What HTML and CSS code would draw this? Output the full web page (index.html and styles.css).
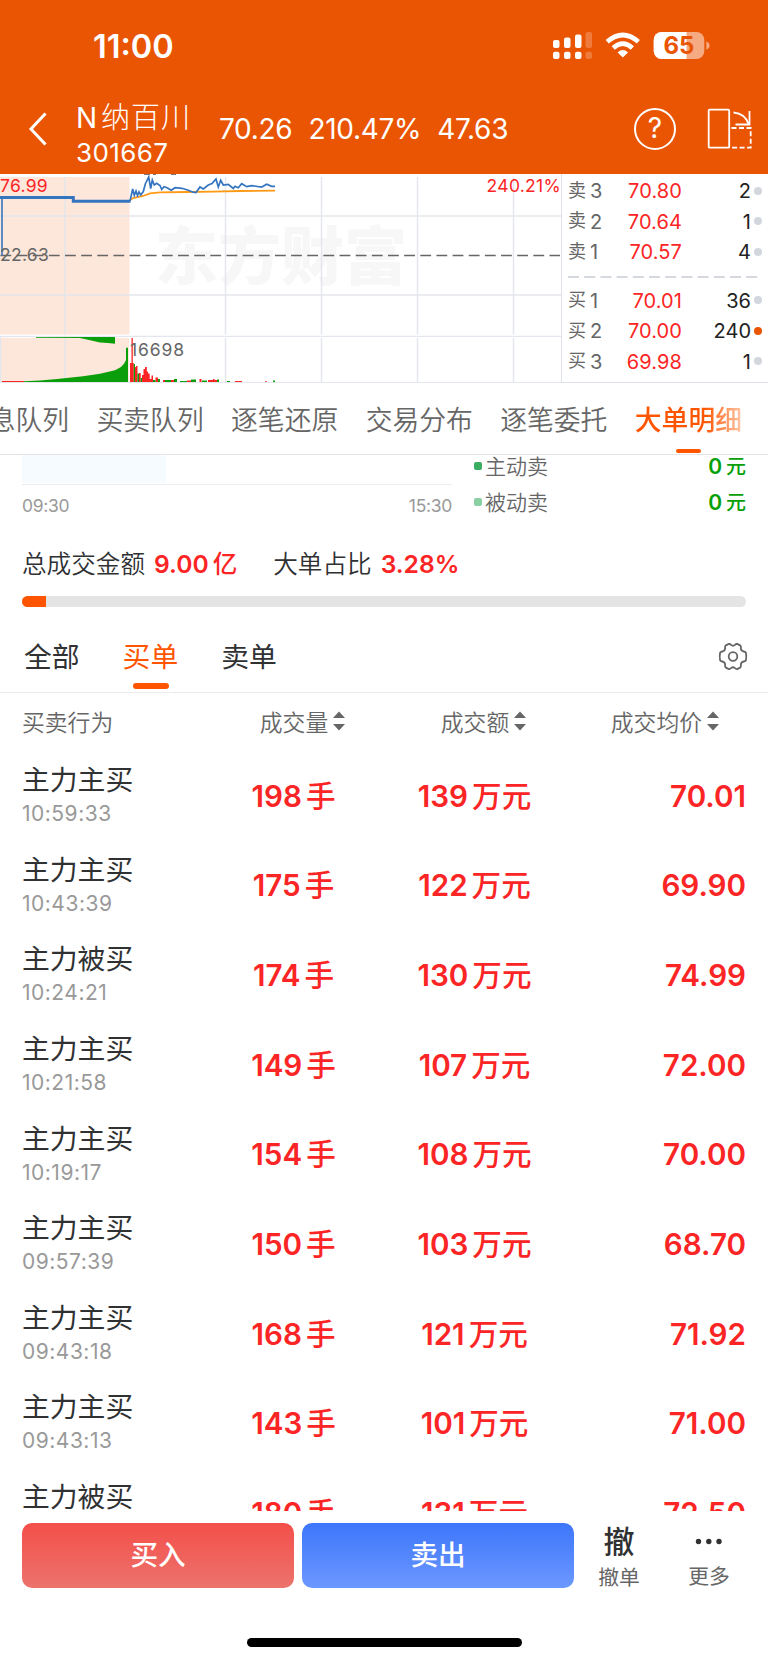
FILE: index.html
```html
<!DOCTYPE html>
<html lang="zh-CN">
<head>
    <meta charset="UTF-8">
    <meta name="viewport" content="width=device-width, initial-scale=1.0">
    <title>N纳百川 301667</title>
    <link rel="stylesheet" href="styles.css">
</head>
<body>
    <header class="top">
        <div class="status">
            <span class="clock">11:00</span>
            <svg class="status-icons" width="158" height="30" viewBox="552 31 158 30">
                <g fill="#fff">
                    <rect x="553" y="40" width="6.5" height="8" rx="2"/>
                    <rect x="564" y="37.5" width="6.5" height="10.5" rx="2"/>
                    <rect x="575" y="34.5" width="6.5" height="13.5" rx="2"/>
                    <rect x="585.5" y="32" width="6.5" height="16" rx="2" opacity=".22"/>
                    <rect x="553" y="51.8" width="6.5" height="7.2" rx="2"/>
                    <rect x="564" y="51.8" width="6.5" height="7.2" rx="2"/>
                    <rect x="575" y="51.8" width="6.5" height="7.2" rx="2"/>
                    <rect x="585.5" y="51.8" width="6.5" height="7.2" rx="2" opacity=".22"/>
                    <path d="M622.8 57.6 L617.6 52.4 Q622.8 47.8 628 52.4 Z"/>
                </g>
                <g fill="none" stroke="#fff" stroke-width="4.6">
                    <path d="M607.2 41.8 Q622.8 28.2 638.4 41.8"/>
                    <path d="M613.2 48 Q622.8 39.4 632.4 48"/>
                </g>
                <clipPath id="charge"><rect x="653" y="31" width="33.5" height="30"/></clipPath>
                <rect x="653.7" y="32" width="50.6" height="27" rx="8" fill="#fff" opacity=".5"/>
                <rect x="653.7" y="32" width="50.6" height="27" rx="8" fill="#fff" clip-path="url(#charge)"/>
                <path d="M706.3 41.5 Q709.5 42.5 709.5 45.5 Q709.5 48.5 706.3 49.5 Z" fill="#fff" opacity=".5"/>
                <text class="battery" x="679" y="54" text-anchor="middle">65</text>
            </svg>
        </div>
        <div class="nav">
            <svg class="back" width="20" height="34" viewBox="0 0 20 34"><path d="M17.5 1.5 L3 17 L17.5 32.5"/></svg>
            <div class="stock">
                <span class="stock-name">N<i>纳百川</i></span>
                <span class="stock-code">301667</span>
            </div>
            <div class="quote">
                <span>70.26</span>
                <span>210.47%</span>
                <span>47.63</span>
            </div>
            <span class="help">?</span>
            <svg class="rotate" width="46" height="42" viewBox="707 108 46 42">
                <rect x="708.7" y="109.7" width="20.5" height="38" rx="1"/>
                <path d="M731.5 128 H750.7 V147.7 H731.5" stroke-dasharray="5 2.5"/>
                <path d="M733.5 112.5 Q745 113.5 748.5 124"/>
                <path d="M749.5 111 V124.5 H735.5"/>
            </svg>
        </div>
    </header>

    <section class="market">
        <svg class="chart" width="561" height="209" viewBox="0 174 561 209">
            <rect x="0" y="177" width="129.5" height="157.5" fill="#fde6da"/>
            <rect x="1" y="337.8" width="128" height="44.5" fill="#fde6da"/>
            <text class="watermark" x="155" y="279">东方财富</text>
            <g stroke="#e3e6ec" stroke-width="1.4">
                <path d="M0 216 H561 M0 295 H561 M0 336.4 H561 M0 382.6 H561 M0.5 337 V382"/>
                <path d="M65 177 V334.5 M225.5 177 V334.5 M321.5 177 V334.5 M417.5 177 V334.5 M513.5 177 V334.5"/>
                <path d="M65 338 V382 M225.5 338 V382 M321.5 338 V382 M417.5 338 V382 M513.5 338 V382"/>
            </g>
            <path d="M0 255.5 H560" stroke="#666" stroke-width="1.3" stroke-dasharray="10.8 5.35" stroke-dashoffset="-.4"/>

            <!-- average and price lines -->
            <path d="M130 200 L133 198 L143 196 L150 193.3 L160 192.3 L187 192 L213 191.7 L240 191 L275 190.6" fill="none" stroke="#ff9a17" stroke-width="1.8"/>
            <path d="M2 255.5 V197.5" stroke="#3575c0" stroke-width="1.6"/>
            <path d="M0 197.5 H73.3 V201.3 H130.5" fill="none" stroke="#3575c0" stroke-width="3"/>
            <path d="M130 201 L132.7 189 L134.3 195.5 L136 191 L137.5 195.5 L139 192 L140.7 195 L143.3 191.5 L145.3 184 L148.7 177 L150.7 188.5 L152.3 180 L154.3 185 L156.7 183.3 L160 185.5 L161.7 189.5 L164 186.7 L167 187.7 L171.3 190.3 L175 187.7 L182 188.3 L188.3 190.3 L193 192.2 L196 192.5 L200 187 L203.3 189 L208.3 185 L212 183.6 L216 179 L218.3 187 L220.7 180.3 L223.3 185 L228.3 184.3 L233.3 188.5 L235 186.3 L238.3 187.7 L241.7 183.7 L246.7 186.7 L251.7 185.7 L261.7 187 L266.7 184.3 L271.7 186.3 L275 186.3" fill="none" stroke="#3575c0" stroke-width="1.7"/>

            <!-- volume -->
            <path d="M36 337 H115 V343.7 L108 343 L100 342.5 L88 339.7 L80 338 L36 337.7 Z" fill="#0a9f0a"/>
            <path d="M24 382 V381.3 L40 380.5 L57 379 L83 376.3 L100 373.7 L115 370.3 L121 367 L124 363.7 L126 360 V347.7 H128 V382 Z" fill="#0a9f0a"/>
            <path d="M2 381.5 H24" stroke="#fb2525" stroke-width="1"/>
            <g fill="#fb2525">
                <path d="M130 382 V363 H131.5 V338 H132.8 V363 H133.8 V382 Z"/>
                <path d="M135 382 V367 H136 V366 H137.5 V382 Z M139 382 V373 H140.7 V382 Z"/>
                <path d="M142 382 V375 H143.5 V369 H145 V367 H146.8 V371.5 H148 V373.5 H149.7 V379 H151.5 V375.5 H153 V382 Z"/>
                <path d="M155.5 382 V377.5 H158 V382 Z M163 380 H165 V382 H163 Z M171 380 H174 V382 H171 Z M187 380.5 H191 V382 H187 Z M199.5 379 H201.5 V382 H199.5 Z M208 380 H217 V382 H208 Z M213 379 H214.5 V380 H213 Z M235 381 H242 V382 H235 Z M265 381.3 H267 V382 H265 Z"/>
            </g>
            <g fill="#0a9f0a">
                <path d="M133.8 382 V364 H135 V382 Z M137.5 382 V373.5 H139 V382 Z M140.7 382 V378 H142 V382 Z M153 382 V380 H155.5 V382 Z M158 382 V379 H160 V382 Z M165 382 V380 H171 V382 Z M174 382 V379 H177 V382 Z M180 381 H187 V382 H180 Z M191 379.5 H196 V382 H191 Z M202 380.5 H207 V382 H202 Z M217 379.5 H219 V382 H217 Z M227 381 H230 V382 H227 Z M273 380.5 H275 V382 H273 Z"/>
            </g>
            <path d="M144 174.5 H150 M153 174.5 H156 M171 174.5 H176" stroke="#777" stroke-width="1"/>
            <text class="mark up" x="0" y="192">76.99</text>
            <text class="mark" x="0" y="261">22.63</text>
            <text class="mark wide" x="130" y="355.5">16698</text>
            <text class="mark up" x="561" y="192" text-anchor="end">240.21%</text>
        </svg>
        <div class="book">
            <div class="book-row"><span class="side">卖<b>3</b></span><span class="price">70.80</span><span class="vol">2</span><span class="dot"></span></div>
            <div class="book-row"><span class="side">卖<b>2</b></span><span class="price">70.64</span><span class="vol">1</span><span class="dot"></span></div>
            <div class="book-row"><span class="side">卖<b>1</b></span><span class="price">70.57</span><span class="vol">4</span><span class="dot"></span></div>
            <svg class="book-split" width="190" height="2" viewBox="0 0 190 2"><path d="M0 1 H189.5" stroke="#d5d8de" stroke-width="2" stroke-dasharray="11 5.2"/></svg>
            <div class="book-row"><span class="side">买<b>1</b></span><span class="price">70.01</span><span class="vol">36</span><span class="dot"></span></div>
            <div class="book-row"><span class="side">买<b>2</b></span><span class="price">70.00</span><span class="vol">240</span><span class="dot hot"></span></div>
            <div class="book-row"><span class="side">买<b>3</b></span><span class="price">69.98</span><span class="vol">1</span><span class="dot"></span></div>
        </div>
    </section>

    <nav class="tabs">
        <span class="tab">消息队列</span>
        <span class="tab">买卖队列</span>
        <span class="tab">逐笔还原</span>
        <span class="tab">交易分布</span>
        <span class="tab">逐笔委托</span>
        <span class="tab active">大单明细</span>
    </nav>

    <section class="flow">
        <div class="flow-chart">
            <div class="flow-plot"><div class="flow-fill"></div></div>
            <div class="flow-axis"><span>09:30</span><span>15:30</span></div>
        </div>
        <div class="legend">
            <div class="legend-row"><span class="key"></span>主动卖<b>0<i>元</i></b></div>
            <div class="legend-row"><span class="key passive"></span>被动卖<b>0<i>元</i></b></div>
        </div>
    </section>

    <section class="summary">
        <div class="summary-text">
            <span>总成交金额<b>9.00<i>亿</i></b></span>
            <span>大单占比<b>3.28%</b></span>
        </div>
        <div class="ratio"><div class="ratio-fill" style="width: 3.28%"></div></div>
    </section>

    <div class="filters">
        <span class="filter">全部</span>
        <span class="filter active">买单</span>
        <span class="filter">卖单</span>
        <svg class="gear" width="30" height="30" viewBox="0 0 30 30">
            <path d="M10.7 1.9 Q12.2 1.7 13 2.9 Q15 4.5 17 2.9 Q17.8 1.7 19.3 1.9 L22.4 3.6 Q23.3 4.5 22.8 6 Q22.9 9 25.7 9.5 Q27.2 9.5 27.9 10.8 Q28.7 14.5 27.9 18.2 Q27.2 19.5 25.7 19.5 Q22.9 20 22.8 23 Q23.3 24.5 22.4 25.4 L19.3 27.1 Q17.8 27.3 17 26.1 Q15 24.5 13 26.1 Q12.2 27.3 10.7 27.1 L7.6 25.4 Q6.7 24.5 7.2 23 Q7.1 20 4.3 19.5 Q2.8 19.5 2.1 18.2 Q1.3 14.5 2.1 10.8 Q2.8 9.5 4.3 9.5 Q7.1 9 7.2 6 Q6.7 4.5 7.6 3.6 Z"/>
            <circle cx="15" cy="14.5" r="4.3"/>
        </svg>
    </div>

    <div class="deals-head">
        <span>买卖行为</span>
        <span class="sort">成交量<svg width="12" height="20" viewBox="0 0 12 20"><path d="M0 7 L6 .5 L12 7 Z M0 13 L6 19.5 L12 13 Z"/></svg></span>
        <span class="sort">成交额<svg width="12" height="20" viewBox="0 0 12 20"><path d="M0 7 L6 .5 L12 7 Z M0 13 L6 19.5 L12 13 Z"/></svg></span>
        <span class="sort last">成交均价<svg width="12" height="20" viewBox="0 0 12 20"><path d="M0 7 L6 .5 L12 7 Z M0 13 L6 19.5 L12 13 Z"/></svg></span>
    </div>

    <main class="deals">
        <div class="deal"><div class="act">主力主买<time>10:59:33</time></div><b>198<i>手</i></b><b>139<i>万元</i></b><b>70.01</b></div>
        <div class="deal"><div class="act">主力主买<time>10:43:39</time></div><b>175<i>手</i></b><b>122<i>万元</i></b><b>69.90</b></div>
        <div class="deal"><div class="act">主力被买<time>10:24:21</time></div><b>174<i>手</i></b><b>130<i>万元</i></b><b>74.99</b></div>
        <div class="deal"><div class="act">主力主买<time>10:21:58</time></div><b>149<i>手</i></b><b>107<i>万元</i></b><b>72.00</b></div>
        <div class="deal"><div class="act">主力主买<time>10:19:17</time></div><b>154<i>手</i></b><b>108<i>万元</i></b><b>70.00</b></div>
        <div class="deal"><div class="act">主力主买<time>09:57:39</time></div><b>150<i>手</i></b><b>103<i>万元</i></b><b>68.70</b></div>
        <div class="deal"><div class="act">主力主买<time>09:43:18</time></div><b>168<i>手</i></b><b>121<i>万元</i></b><b>71.92</b></div>
        <div class="deal"><div class="act">主力主买<time>09:43:13</time></div><b>143<i>手</i></b><b>101<i>万元</i></b><b>71.00</b></div>
        <div class="deal"><div class="act">主力被买</div><b>180<i>手</i></b><b>131<i>万元</i></b><b>72.50</b></div>
    </main>

    <footer class="trade">
        <div class="actions">
            <span class="btn buy">买入</span>
            <span class="btn sell">卖出</span>
            <div class="tool"><span class="tool-icon">撤</span>撤单</div>
            <div class="tool">
                <svg class="tool-icon" width="28" height="36" viewBox="0 0 28 36"><circle cx="3.5" cy="18.5" r="2.7"/><circle cx="13.8" cy="18.5" r="2.7"/><circle cx="24" cy="18.5" r="2.7"/></svg>更多
            </div>
        </div>
        <div class="home-bar"></div>
    </footer>
</body>
</html>
```

FILE: styles.css
```css
* {
    box-sizing: border-box;
}

body {
    margin: 0;
    width: 768px;
    height: 1662px;
    overflow: hidden;
    display: flex;
    flex-direction: column;
    background: #fff;
    color: #303133;
    font-family: Inter, "Noto Sans CJK SC", sans-serif;
    white-space: nowrap;
}

i {
    font-style: normal;
}

svg {
    display: block;
    flex: none;
}

/* header */
.top {
    height: 174px;
    flex: none;
    background: #ea5504;
    color: #fff;
}

.status {
    height: 92px;
    display: flex;
    justify-content: space-between;
    align-items: center;
    padding: 0 58px 0 93px;
}

.clock {
    font-size: 32.5px;
    font-weight: 600;
}

.battery {
    font-size: 24px;
    font-weight: 700;
    fill: #ea5504;
}

.nav {
    height: 82px;
    display: flex;
    align-items: center;
    padding: 0 15px 8px 28px;
}

.back path {
    fill: none;
    stroke: #fff;
    stroke-width: 3;
}

.stock {
    width: 143px;
    margin-left: 28px;
    padding-top: 12px;
}

.stock-name,
.stock-code {
    display: block;
    line-height: 36px;
}

.stock-name {
    font-size: 28px;
}

.stock-name i {
    margin-left: 4px;
    font-size: 29px;
    font-weight: 300;
    letter-spacing: 0.9px;
}

.stock-code {
    font-size: 26px;
    line-height: 34px;
    letter-spacing: 0.4px;
}

.quote {
    flex: 1;
    display: flex;
    gap: 16px;
    font-size: 28px;
    letter-spacing: -0.3px;
}

.help {
    width: 42px;
    height: 42px;
    margin-right: 31px;
    border: 2px solid #fff;
    border-radius: 50%;
    font-size: 28px;
    line-height: 37px;
    text-align: center;
}

.rotate {
    fill: none;
    stroke: #fff;
    stroke-width: 1.8;
}

/* chart and order book */
.market {
    height: 209px;
    flex: none;
    display: flex;
}

.mark {
    font-size: 17.5px;
    letter-spacing: 0.3px;
    fill: #666;
}

.mark.up {
    fill: #fb2525;
}

.mark.wide {
    letter-spacing: 0.9px;
}

.watermark {
    font-size: 63px;
    font-weight: 900;
    fill: #f7f7f8;
}

.book {
    width: 207px;
    padding: 2px 6px 0 6px;
    border-left: 1px solid #dfe2e8;
    border-bottom: 1px solid #dfe2e8;
}

.book-row {
    height: 30.5px;
    display: flex;
    align-items: center;
    font-size: 20px;
    line-height: 30px;
}

.side {
    width: 34px;
    display: flex;
    align-items: center;
    gap: 4px;
    font-size: 18px;
    line-height: 26px;
    padding-bottom: 1px;
    color: #666;
}

.side b {
    padding-top: 1px;
    font-size: 20px;
    font-weight: 400;
}

.price {
    width: 80px;
    color: #fb2525;
    text-align: right;
    letter-spacing: 0.1px;
}

.vol {
    flex: 1;
    text-align: right;
    color: #222;
}

.dot {
    width: 8px;
    height: 8px;
    margin: 0 0 1px 3px;
    border-radius: 50%;
    background: #d2d6dd;
}

.dot.hot {
    background: #ea5504;
}

.book-split {
    margin: 8px 0 8px;
}

/* page tabs */
.tabs {
    height: 72px;
    flex: none;
    display: flex;
    justify-content: flex-end;
    gap: 27.4px;
    padding-right: 26px;
    border-bottom: 1px solid #e4e4e6;
    overflow: hidden;
}

.tab {
    position: relative;
    font-size: 26.8px;
    font-weight: 350;
    line-height: 74px;
    color: #666;
}

.tab.active {
    color: transparent;
    font-weight: 500;
    background: linear-gradient(90deg, #ff5500 65%, #ffc7a8);
    background-clip: text;
    -webkit-background-clip: text;
}

.tab.active::after {
    content: "";
    position: absolute;
    left: 41px;
    bottom: 1px;
    width: 25px;
    height: 4px;
    border-radius: 2px;
    background: #ff5500;
}

/* money flow */
.flow {
    height: 66px;
    flex: none;
    display: flex;
    justify-content: space-between;
    padding: 0 22px;
}

.flow-chart {
    width: 430px;
}

.flow-plot {
    height: 30px;
    border-bottom: 1px solid #ececee;
}

.flow-fill {
    width: 144px;
    height: 28px;
    background: #f5fbff;
}

.flow-axis {
    display: flex;
    justify-content: space-between;
    padding-top: 10px;
    font-size: 17.5px;
    letter-spacing: -0.3px;
    color: #999;
}

.legend {
    width: 272px;
    margin-top: -8px;
}

.legend-row {
    height: 36px;
    display: flex;
    align-items: center;
    font-size: 21px;
    font-weight: 350;
    color: #666;
}

.key {
    width: 8px;
    height: 8px;
    margin: 2px 3px 0 0;
    border-radius: 2px;
    background: #3bad62;
}

.key.passive {
    background: #8bd0a3;
}

.legend-row b {
    margin-left: auto;
    font-size: 21px;
    font-weight: 600;
    color: #07a007;
}

.legend-row i {
    margin-left: 4px;
    font-size: 20px;
    font-weight: 500;
}

/* totals */
.summary {
    height: 90px;
    flex: none;
    padding: 24px 22px 0;
}

.summary-text {
    display: flex;
    gap: 36px;
    font-size: 24.6px;
    font-weight: 350;
    line-height: 38px;
}

.summary-text b {
    margin-left: 9px;
    font-weight: 600;
    color: #fb2525;
}

.summary-text i {
    margin-left: 4px;
    font-weight: 500;
}

.ratio {
    height: 11px;
    margin-top: 13px;
    border-radius: 6px;
    background: #e4e4e4;
    overflow: hidden;
}

.ratio-fill {
    height: 100%;
    background: #ff5500;
}

.filters {
    height: 82px;
    flex: none;
    display: flex;
    align-items: center;
    gap: 43px;
    padding: 10px 20px 0 24px;
    border-bottom: 1px solid #ebebed;
}

.filter {
    position: relative;
    font-size: 27.8px;
    line-height: 72px;
}

.filter.active {
    color: #ff5500;
}

.filter.active::after {
    content: "";
    position: absolute;
    left: 10px;
    bottom: 4px;
    width: 36px;
    height: 6px;
    border-radius: 3px;
    background: #ff5500;
}

.gear {
    margin-left: auto;
}

.gear path,
.gear circle {
    fill: none;
    stroke: #666;
    stroke-width: 1.8;
}

/* deals table */
.deals-head,
.deal {
    display: grid;
    grid-template-columns: repeat(4, 181px);
    padding: 0 22px;
}

.deals-head {
    height: 59px;
    flex: none;
    align-items: center;
    padding-bottom: 3px;
    font-size: 22.8px;
    font-weight: 350;
    color: #666;
}

.sort {
    display: flex;
    align-items: center;
    justify-content: center;
    gap: 5px;
    padding-left: 18px;
}

.sort.last {
    justify-content: flex-end;
    padding-right: 27px;
}

.sort path {
    fill: #666;
}

.deals {
    flex: 1;
    min-height: 0;
    overflow: hidden;
}

.deal {
    height: 89.65px;
    align-items: center;
}

.act {
    align-self: start;
    padding-top: 8px;
    font-size: 27.8px;
    line-height: 40px;
}

.act time {
    display: block;
    padding-top: 1px;
    font-size: 21px;
    line-height: 25px;
    letter-spacing: 0.5px;
    color: #999;
}

.deal b {
    padding-bottom: 2px;
    font-size: 29.6px;
    font-weight: 600;
    line-height: 36px;
    color: #fb2525;
    text-align: center;
}

.deal b:last-child {
    text-align: right;
}

.deal i {
    margin-left: 4px;
    font-weight: 500;
}

/* trade bar */
.trade {
    height: 151px;
    flex: none;
    padding-top: 12px;
    background: #fff;
}

.actions {
    display: flex;
    padding-left: 22px;
}

.btn {
    width: 272px;
    height: 65px;
    border-radius: 10px;
    color: #fff;
    font-size: 27.6px;
    font-weight: 500;
    line-height: 65px;
    text-align: center;
}

.buy {
    margin-right: 8px;
    background: linear-gradient(#f44f4a, #ec736c);
}

.sell {
    background: linear-gradient(#3d76fa, #6c98ff);
}

.tool {
    width: 90px;
    display: flex;
    flex-direction: column;
    align-items: center;
    font-size: 20.8px;
    line-height: 36px;
    color: #666;
}

.tool-icon {
    font-size: 31px;
    font-weight: 500;
    line-height: 37px;
    color: #303133;
    fill: #303133;
}

.home-bar {
    width: 275px;
    height: 9px;
    margin: 42px auto 0;
    border-radius: 5px;
    background: #000;
}
```
